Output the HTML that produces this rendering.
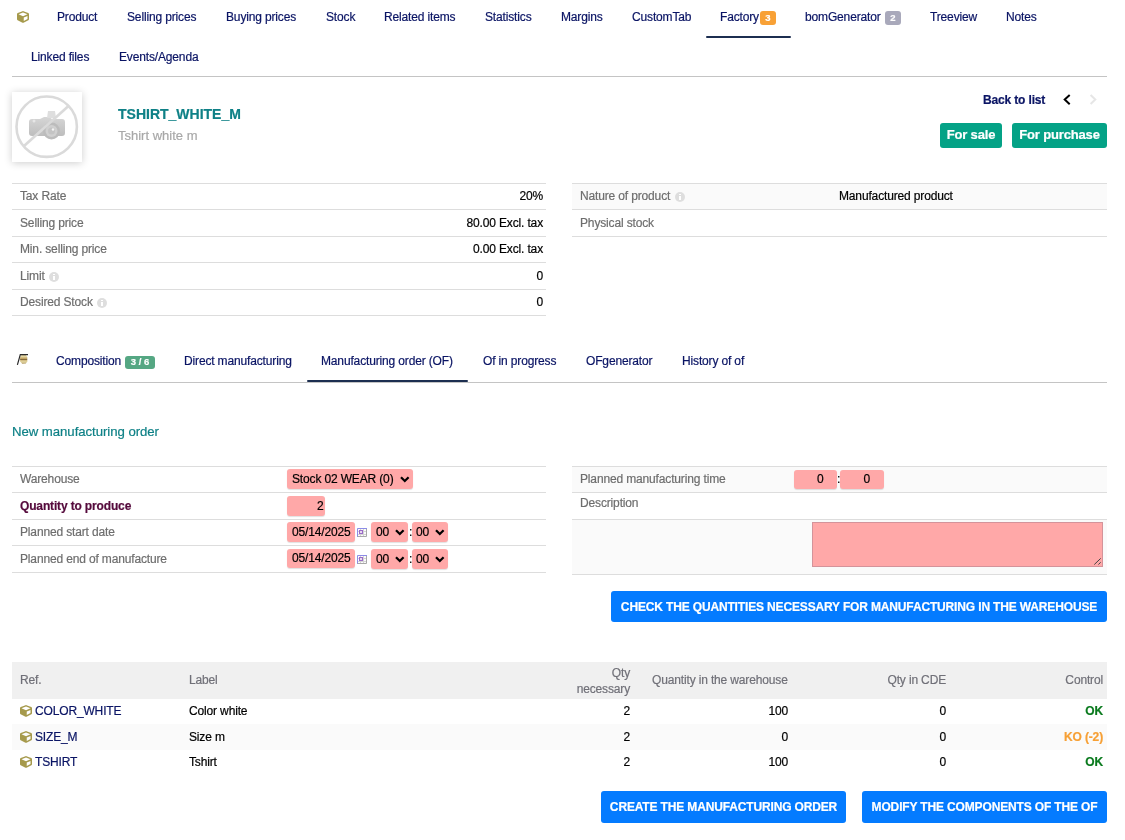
<!DOCTYPE html>
<html><head><meta charset="utf-8">
<style>
*{box-sizing:border-box;margin:0;padding:0}
html,body{width:1125px;height:840px;overflow:hidden;background:#fff}
.a,.badge,.btn,.gbtn{-webkit-text-stroke:0.2px currentColor}
body{font-family:"Liberation Sans",sans-serif;font-size:12px;letter-spacing:-0.15px;color:#000;position:relative}
.a{position:absolute;white-space:nowrap;line-height:1}
.tab{color:rgb(10,20,100)}
.hl{position:absolute;height:1px;background:#ddd}
.lbl{color:#6e6e6e}
.badge{position:absolute;border-radius:3px;color:#fff;font-weight:bold;font-size:9.5px;letter-spacing:0;line-height:13px;text-align:center}
.btn{position:absolute;background:#047bff;color:#fff;font-weight:bold;font-size:12px;border-radius:3px;text-align:center}
.gbtn{position:absolute;background:#04a286;color:#fff;font-weight:bold;font-size:13px;border-radius:3px;text-align:center}
.pink{position:absolute;background:#ffa8a8;border-radius:3px;box-shadow:0 1px 1px rgba(0,0,0,.12)}
.chev{position:absolute}
.info{position:absolute;width:10px;height:10px;border-radius:5px;background:#dedede}
.info:after{content:"";position:absolute;left:4px;top:4px;width:2px;height:4px;background:#fff}
.info:before{content:"";position:absolute;left:4px;top:2px;width:2px;height:1px;background:#fff}
.th{color:#707078}
</style></head>
<body><div style="position:absolute;left:0;top:0;width:1125px;height:840px;will-change:transform">
<!-- top tabs row 1 -->
<svg class="a" style="left:16.7px;top:10.5px" width="12" height="12" viewBox="0 0 512 512"><path fill="#a69a4c" d="M239.1 6.3l-208 78c-18.7 7-31.1 24.9-31.1 44.9v225.1c0 18.2 10.3 34.8 26.5 42.9l208 104c13.5 6.8 29.4 6.8 42.9 0l208-104c16.3-8.1 26.5-24.8 26.5-42.9V129.3c0-20-12.4-37.9-31.1-44.9l-208-78C262 2.2 250 2.2 239.1 6.3zM256 68.4l192 72v1.1l-192 78-192-78v-1.1l192-72zm32 356V275.5l160-65v133.9l-160 80z"/></svg>
<div class="a tab" style="left:57px;top:11px">Product</div>
<div class="a tab" style="left:127px;top:11px">Selling prices</div>
<div class="a tab" style="left:226px;top:11px">Buying prices</div>
<div class="a tab" style="left:326px;top:11px">Stock</div>
<div class="a tab" style="left:384px;top:11px">Related items</div>
<div class="a tab" style="left:485px;top:11px">Statistics</div>
<div class="a tab" style="left:561px;top:11px">Margins</div>
<div class="a tab" style="left:632px;top:11px">CustomTab</div>
<div class="a tab" style="left:720px;top:11px">Factory</div>
<div class="badge" style="left:760px;top:11px;width:16px;height:14px;background:#f8a136">3</div>
<div class="a" style="left:706px;top:36px;width:85px;height:2px;background:#1c2e50;border-radius:1px"></div>
<div class="a tab" style="left:805px;top:11px">bomGenerator</div>
<div class="badge" style="left:885px;top:11px;width:16px;height:14px;background:#a9a9bb">2</div>
<div class="a tab" style="left:930px;top:11px">Treeview</div>
<div class="a tab" style="left:1006px;top:11px">Notes</div>
<!-- row 2 -->
<div class="a tab" style="left:31px;top:51px">Linked files</div>
<div class="a tab" style="left:119px;top:51px">Events/Agenda</div>
<div class="hl" style="left:12px;top:76px;width:1095px;background:#c4c4c4"></div>

<!-- product header -->
<div class="a" style="left:12px;top:92px;width:70px;height:70px;background:#fff;box-shadow:0 1px 8px rgba(0,0,0,.2)">
<svg width="70" height="70" viewBox="0 0 70 70" style="position:absolute;left:0;top:0">
<defs><linearGradient id="cb" x1="0" y1="0" x2="0" y2="1"><stop offset="0" stop-color="#d6d6d6"/><stop offset="1" stop-color="#bdbdbd"/></linearGradient></defs>
<g>
<path d="M17 30 q0-3 3-3 h8 l4-2 h5 l3 2 h10 q3 0 3 3 v11 q0 3-3 3 h-30 q-3 0-3-3z" fill="url(#cb)"/>
<path d="M36 19 h7 l1 7 h-9z" fill="#dedede"/>
<circle cx="39.5" cy="39" r="8.5" fill="#bcbcbc"/>
<circle cx="39.5" cy="39" r="6" fill="#d0d0d0"/>
<circle cx="39.5" cy="39" r="3.5" fill="#c4c4c4"/>
<circle cx="41" cy="37.5" r="1.2" fill="#f4f4f4"/>
<circle cx="22" cy="29" r="1.5" fill="#e6e6e6"/>
</g>
<circle cx="34.7" cy="34.7" r="30.2" fill="none" stroke="#dadada" stroke-width="2.6"/>
<line x1="56.5" y1="14" x2="12" y2="54" stroke="#dadada" stroke-width="2.6"/>
</svg>
</div>
<div class="a" style="left:118px;top:107px;font-size:14px;font-weight:bold;letter-spacing:0;color:rgb(14,128,134)">TSHIRT_WHITE_M</div>
<div class="a" style="left:118px;top:129px;font-size:13px;letter-spacing:0;color:#a8a8a8">Tshirt white m</div>
<div class="a" style="left:983px;top:94px;font-weight:bold;color:rgb(10,20,100)">Back to list</div>
<svg class="a" style="left:1060px;top:92px" width="14" height="15" viewBox="0 0 14 15"><path d="M9.7 2.9 L4.7 7.5 L9.7 12.2" fill="none" stroke="#000" stroke-width="2"/></svg>
<svg class="a" style="left:1086px;top:92px" width="14" height="15" viewBox="0 0 14 15"><path d="M4.6 3 L9.3 7.5 L4.6 12" fill="none" stroke="#e6e6e6" stroke-width="2"/></svg>
<div class="gbtn" style="left:940px;top:123px;width:62px;height:25px;line-height:24px">For sale</div>
<div class="gbtn" style="left:1012px;top:123px;width:95px;height:25px;line-height:24px">For purchase</div>

<!-- props left -->
<div class="hl" style="left:12px;top:183px;width:534px"></div>
<div class="a lbl" style="left:20px;top:190px">Tax Rate</div>
<div class="a" style="right:582px;top:190px">20%</div>
<div class="hl" style="left:12px;top:209px;width:534px"></div>
<div class="a lbl" style="left:20px;top:217px">Selling price</div>
<div class="a" style="right:582px;top:217px">80.00 Excl. tax</div>
<div class="hl" style="left:12px;top:236px;width:534px"></div>
<div class="a lbl" style="left:20px;top:243px">Min. selling price</div>
<div class="a" style="right:582px;top:243px">0.00 Excl. tax</div>
<div class="hl" style="left:12px;top:262px;width:534px"></div>
<div class="a lbl" style="left:20px;top:270px">Limit</div>
<div class="info" style="left:49px;top:272px"></div>
<div class="a" style="right:582px;top:270px">0</div>
<div class="hl" style="left:12px;top:289px;width:534px"></div>
<div class="a lbl" style="left:20px;top:296px">Desired Stock</div>
<div class="info" style="left:97px;top:298px"></div>
<div class="a" style="right:582px;top:296px">0</div>
<div class="hl" style="left:12px;top:315px;width:534px"></div>
<!-- props right -->
<div class="a" style="left:572px;top:184px;width:535px;height:25px;background:#fafafa"></div>
<div class="hl" style="left:572px;top:183px;width:535px"></div>
<div class="a lbl" style="left:580px;top:190px">Nature of product</div>
<div class="info" style="left:675px;top:192px"></div>
<div class="a" style="left:839px;top:190px">Manufactured product</div>
<div class="hl" style="left:572px;top:209px;width:535px"></div>
<div class="a lbl" style="left:580px;top:217px">Physical stock</div>
<div class="hl" style="left:572px;top:236px;width:535px"></div>

<!-- sub tabs -->
<svg class="a" style="left:14px;top:351px" width="16" height="16" viewBox="0 0 16 16">
<defs><linearGradient id="gg" x1="0" y1="0" x2="0" y2="1"><stop offset="0" stop-color="#c8b070"/><stop offset=".15" stop-color="#e8dca8"/><stop offset=".42" stop-color="#c0a060"/><stop offset=".5" stop-color="#7a6030"/><stop offset=".58" stop-color="#ccb478"/><stop offset=".8" stop-color="#e4d8a4"/><stop offset="1" stop-color="#a88c50"/></linearGradient></defs>
<path d="M7.2 4.3 L11.8 4 L13.3 6 L13.3 10.5 L11.8 12.6 L8.2 12.8 L6.2 10.5 L6 6.2 Z" fill="url(#gg)"/>
<path d="M14 3.6 H6.3 L3.4 13.8" fill="none" stroke="#2a2a2a" stroke-width="1.2"/>
</svg>
<div class="a tab" style="left:56px;top:355px">Composition</div>
<div class="badge" style="left:125px;top:356px;width:30px;height:13px;line-height:12px;background:#55a783">3 / 6</div>
<div class="a tab" style="left:184px;top:355px">Direct manufacturing</div>
<div class="a tab" style="left:321px;top:355px">Manufacturing order (OF)</div>
<div class="a" style="left:307px;top:380px;width:161px;height:2px;background:#1c2e50;border-radius:1px"></div>
<div class="a tab" style="left:483px;top:355px">Of in progress</div>
<div class="a tab" style="left:586px;top:355px">OFgenerator</div>
<div class="a tab" style="left:682px;top:355px">History of of</div>
<div class="hl" style="left:12px;top:382px;width:1095px;background:#c4c4c4"></div>

<div class="a" style="left:12px;top:425px;font-size:13.2px;letter-spacing:-0.05px;color:rgb(14,128,134)">New manufacturing order</div>

<!-- form left -->
<div class="hl" style="left:12px;top:466px;width:534px"></div>
<div class="a lbl" style="left:20px;top:473px">Warehouse</div>
<div class="pink" style="left:287px;top:469px;width:126px;height:20px"></div>
<div class="a" style="left:292px;top:473px">Stock 02 WEAR (0)</div>
<svg class="chev" style="left:400px;top:475px" width="10" height="8" viewBox="0 0 10 8"><path d="M1 2.2 L4.8 6 L8.6 2.2" fill="none" stroke="#000" stroke-width="2.2"/></svg>
<div class="hl" style="left:12px;top:492px;width:534px"></div>
<div class="a" style="left:20px;top:500px;font-weight:bold;color:rgb(85,10,60)">Quantity to produce</div>
<div class="pink" style="left:287px;top:496px;width:38px;height:20px"></div>
<div class="a" style="left:317px;top:500px">2</div>
<div class="hl" style="left:12px;top:519px;width:534px"></div>
<div class="a lbl" style="left:20px;top:526px">Planned start date</div>
<div class="pink" style="left:287px;top:522px;width:68px;height:20px"></div>
<div class="a" style="left:292px;top:526px">05/14/2025</div>
<svg class="a" style="left:357px;top:528px" width="10" height="9" viewBox="0 0 10 9"><rect x="0" y="0" width="10" height="9" fill="#fbfbfb"/><path d="M0 3.5H10M0 6.5H10M3.5 0V9M6.5 0V9" stroke="#d4d4d4" stroke-width="1"/><path d="M.5 9V.5H10" fill="none" stroke="#8c8ce8"/><path d="M.5 8.5H9.5V1" fill="none" stroke="#a8a8a8"/><rect x="2.5" y="2.5" width="3" height="3" fill="#e8d8f0" stroke="#9a6ac8"/></svg>
<div class="pink" style="left:371px;top:522px;width:37px;height:20px"></div>
<div class="a" style="left:376px;top:526px">00</div>
<svg class="chev" style="left:395px;top:528px" width="10" height="8" viewBox="0 0 10 8"><path d="M1 2.2 L4.8 6 L8.6 2.2" fill="none" stroke="#000" stroke-width="2.2"/></svg>
<div class="a" style="left:409px;top:526px">:</div>
<div class="pink" style="left:412px;top:522px;width:36px;height:20px"></div>
<div class="a" style="left:416px;top:526px">00</div>
<svg class="chev" style="left:435px;top:528px" width="10" height="8" viewBox="0 0 10 8"><path d="M1 2.2 L4.8 6 L8.6 2.2" fill="none" stroke="#000" stroke-width="2.2"/></svg>
<div class="hl" style="left:12px;top:545px;width:534px"></div>
<div class="a lbl" style="left:20px;top:553px">Planned end of manufacture</div>
<div class="pink" style="left:287px;top:549px;width:68px;height:19px"></div>
<div class="a" style="left:292px;top:552px">05/14/2025</div>
<svg class="a" style="left:357px;top:555px" width="10" height="9" viewBox="0 0 10 9"><rect x="0" y="0" width="10" height="9" fill="#fbfbfb"/><path d="M0 3.5H10M0 6.5H10M3.5 0V9M6.5 0V9" stroke="#d4d4d4" stroke-width="1"/><path d="M.5 9V.5H10" fill="none" stroke="#8c8ce8"/><path d="M.5 8.5H9.5V1" fill="none" stroke="#a8a8a8"/><rect x="2.5" y="2.5" width="3" height="3" fill="#e8d8f0" stroke="#9a6ac8"/></svg>
<div class="pink" style="left:371px;top:549px;width:37px;height:20px"></div>
<div class="a" style="left:376px;top:553px">00</div>
<svg class="chev" style="left:395px;top:555px" width="10" height="8" viewBox="0 0 10 8"><path d="M1 2.2 L4.8 6 L8.6 2.2" fill="none" stroke="#000" stroke-width="2.2"/></svg>
<div class="a" style="left:409px;top:553px">:</div>
<div class="pink" style="left:412px;top:549px;width:36px;height:20px"></div>
<div class="a" style="left:416px;top:553px">00</div>
<svg class="chev" style="left:435px;top:555px" width="10" height="8" viewBox="0 0 10 8"><path d="M1 2.2 L4.8 6 L8.6 2.2" fill="none" stroke="#000" stroke-width="2.2"/></svg>
<div class="hl" style="left:12px;top:572px;width:534px"></div>

<!-- form right -->
<div class="a" style="left:572px;top:467px;width:535px;height:25px;background:#fafafa"></div>
<div class="a" style="left:572px;top:520px;width:535px;height:54px;background:#fafafa"></div>
<div class="hl" style="left:572px;top:466px;width:535px"></div>
<div class="a lbl" style="left:580px;top:473px">Planned manufacturing time</div>
<div class="pink" style="left:794px;top:470px;width:43px;height:19px"></div>
<div class="a" style="left:817px;top:473px">0</div>
<div class="a" style="left:837px;top:473px">:</div>
<div class="pink" style="left:840px;top:470px;width:44px;height:19px"></div>
<div class="a" style="left:863.5px;top:473px">0</div>
<div class="hl" style="left:572px;top:492px;width:535px"></div>
<div class="a lbl" style="left:580px;top:497px">Description</div>
<div class="hl" style="left:572px;top:519px;width:535px"></div>
<div class="a" style="left:812px;top:522px;width:291px;height:45px;background:#ffa8a8;border:1px solid #d4939a"></div>
<svg class="a" style="left:1093px;top:557px" width="8" height="8" viewBox="0 0 8 8"><path d="M7.7 1.4 L1.3 7.5 M7.7 5.3 L5.4 7.5" stroke="#444" stroke-width="1"/></svg>
<div class="hl" style="left:572px;top:574px;width:535px"></div>

<div class="btn" style="left:611px;top:591px;width:496px;height:31px;line-height:33px">CHECK THE QUANTITIES NECESSARY FOR MANUFACTURING IN THE WAREHOUSE</div>

<!-- table -->
<div class="a" style="left:12px;top:662px;width:1095px;height:37px;background:#f0f0f0"></div>
<div class="a" style="left:12px;top:724px;width:1095px;height:26px;background:#fafafa"></div>
<div class="a th" style="left:20px;top:674px">Ref.</div>
<div class="a th" style="left:189px;top:674px">Label</div>
<div class="a th" style="right:495px;top:665px;text-align:right;line-height:16px">Qty<br>necessary</div>
<div class="a th" style="left:652px;top:674px">Quantity in the warehouse</div>
<div class="a th" style="right:179px;top:674px">Qty in CDE</div>
<div class="a th" style="right:22px;top:674px">Control</div>

<svg class="a" style="left:20px;top:705px" width="12" height="12" viewBox="0 0 512 512"><path fill="#a69a4c" d="M239.1 6.3l-208 78c-18.7 7-31.1 24.9-31.1 44.9v225.1c0 18.2 10.3 34.8 26.5 42.9l208 104c13.5 6.8 29.4 6.8 42.9 0l208-104c16.3-8.1 26.5-24.8 26.5-42.9V129.3c0-20-12.4-37.9-31.1-44.9l-208-78C262 2.2 250 2.2 239.1 6.3zM256 68.4l192 72v1.1l-192 78-192-78v-1.1l192-72zm32 356V275.5l160-65v133.9l-160 80z"/></svg>
<div class="a tab" style="left:35px;top:705px">COLOR_WHITE</div>
<div class="a" style="left:189px;top:705px">Color white</div>
<div class="a" style="right:495px;top:705px">2</div>
<div class="a" style="right:337px;top:705px">100</div>
<div class="a" style="right:179px;top:705px">0</div>
<div class="a" style="right:22px;top:705px;font-weight:bold;color:#0a7a1e">OK</div>

<svg class="a" style="left:20px;top:731px" width="12" height="12" viewBox="0 0 512 512"><path fill="#a69a4c" d="M239.1 6.3l-208 78c-18.7 7-31.1 24.9-31.1 44.9v225.1c0 18.2 10.3 34.8 26.5 42.9l208 104c13.5 6.8 29.4 6.8 42.9 0l208-104c16.3-8.1 26.5-24.8 26.5-42.9V129.3c0-20-12.4-37.9-31.1-44.9l-208-78C262 2.2 250 2.2 239.1 6.3zM256 68.4l192 72v1.1l-192 78-192-78v-1.1l192-72zm32 356V275.5l160-65v133.9l-160 80z"/></svg>
<div class="a tab" style="left:35px;top:731px">SIZE_M</div>
<div class="a" style="left:189px;top:731px">Size m</div>
<div class="a" style="right:495px;top:731px">2</div>
<div class="a" style="right:337px;top:731px">0</div>
<div class="a" style="right:179px;top:731px">0</div>
<div class="a" style="right:22px;top:731px;font-weight:bold;color:#f7a035">KO (-2)</div>

<svg class="a" style="left:20px;top:756px" width="12" height="12" viewBox="0 0 512 512"><path fill="#a69a4c" d="M239.1 6.3l-208 78c-18.7 7-31.1 24.9-31.1 44.9v225.1c0 18.2 10.3 34.8 26.5 42.9l208 104c13.5 6.8 29.4 6.8 42.9 0l208-104c16.3-8.1 26.5-24.8 26.5-42.9V129.3c0-20-12.4-37.9-31.1-44.9l-208-78C262 2.2 250 2.2 239.1 6.3zM256 68.4l192 72v1.1l-192 78-192-78v-1.1l192-72zm32 356V275.5l160-65v133.9l-160 80z"/></svg>
<div class="a tab" style="left:35px;top:756px">TSHIRT</div>
<div class="a" style="left:189px;top:756px">Tshirt</div>
<div class="a" style="right:495px;top:756px">2</div>
<div class="a" style="right:337px;top:756px">100</div>
<div class="a" style="right:179px;top:756px">0</div>
<div class="a" style="right:22px;top:756px;font-weight:bold;color:#0a7a1e">OK</div>

<div class="btn" style="left:601px;top:791px;width:245px;height:32px;line-height:33px">CREATE THE MANUFACTURING ORDER</div>
<div class="btn" style="left:862px;top:791px;width:245px;height:32px;line-height:33px">MODIFY THE COMPONENTS OF THE OF</div>
</div></body></html>
